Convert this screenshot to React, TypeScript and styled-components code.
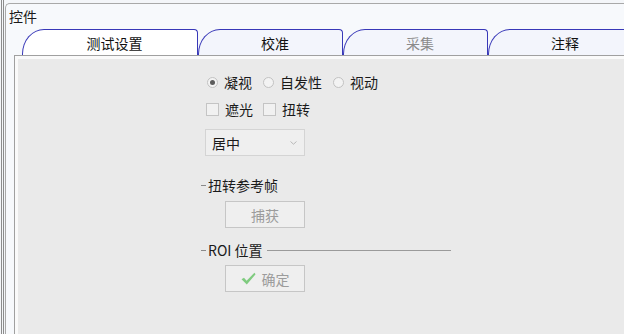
import React from 'react';
import styled, { createGlobalStyle } from 'styled-components';

const GlobalStyle = createGlobalStyle`
  html, body {
    margin: 0;
    padding: 0;
    width: 624px;
    height: 334px;
    overflow: hidden;
    background: #f4f6f9;
    font-family: 'Noto Sans CJK SC', 'Noto Sans', sans-serif;
    font-size: 14px;
    color: #1a1a1a;
  }
`;

const Window = styled.div`
  width: 623px;
  height: 334px;
  margin-left: 1px;
  border-left: 3px double #8c8c8c;
  box-sizing: border-box;
  display: flex;
  overflow: hidden;
`;

const GroupBox = styled.div`
  flex: 1;
  margin: 3px 0 0 1px;
  border-top: 1px solid #a9a9a9;
  border-left: 1px solid #a9a9a9;
  border-top-left-radius: 5px;
  background: #f7f9fc;
  display: flex;
  flex-direction: column;
  min-width: 0;
`;

const Legend = styled.div`
  margin: 3px 0 0 3px;
  height: 18px;
  line-height: 18px;
`;

const TabArea = styled.div`
  flex: 1;
  margin: 4px 0 0 8px;
  display: flex;
  flex-direction: column;
  min-width: 0;
`;

const TabRow = styled.div`
  display: flex;
  padding-left: 8px;
  height: 26px;
`;

const Tab = styled.div<{ $active?: boolean; $disabled?: boolean; $width: number }>`
  flex: 0 0 ${p => p.$width}px;
  box-sizing: border-box;
  height: 26px;
  border: 1px solid #3838b8;
  border-bottom: none;
  border-top-left-radius: 22px 25px;
  border-top-right-radius: 4px;
  background: ${p => (p.$active ? '#ffffff' : '#f3f5fc')};
  color: ${p => (p.$disabled ? '#8a8a8a' : '#111111')};
  display: flex;
  align-items: center;
  justify-content: center;
  padding-left: 9px;
  line-height: 1;
`;

const Panel = styled.div`
  flex: 1;
  border-top: 1px solid #a0a0a0;
  border-left: 1px solid #a0a0a0;
  background: #fafafa;
  padding: 3px 0 0 3px;
  display: flex;
`;

const PanelFill = styled.div`
  flex: 1;
  background: #eaeaea;
  padding: 15px 0 0 183px;
`;

const Column = styled.div`
  display: flex;
  flex-direction: column;
  align-items: flex-start;
`;

const OptionRow = styled.div<{ $top: number }>`
  display: flex;
  align-items: center;
  height: 16px;
  margin: ${p => p.$top}px 0 0 5px;
`;

const Option = styled.label`
  display: flex;
  align-items: center;
  margin-right: 10px;
  line-height: 16px;
`;

const Radio = styled.span<{ $checked?: boolean }>`
  width: 11px;
  height: 11px;
  margin: 0 6px 0 1px;
  box-sizing: border-box;
  border: 1px solid #c2c2c2;
  border-radius: 50%;
  background: #f3f3f3;
  display: flex;
  align-items: center;
  justify-content: center;

  &::after {
    content: '';
    width: 5px;
    height: 5px;
    border-radius: 50%;
    background: ${p => (p.$checked ? '#5c5c5c' : 'transparent')};
  }
`;

const Checkbox = styled.span`
  width: 13px;
  height: 13px;
  margin-right: 6px;
  box-sizing: border-box;
  border: 1px solid #c4c4c4;
  background: #f1f1f1;
`;

const Select = styled.div`
  margin: 12px 0 0 4px;
  width: 100px;
  height: 27px;
  box-sizing: border-box;
  border: 1px solid #d4d4d4;
  background: #efefef;
  display: flex;
  align-items: center;
  justify-content: space-between;
  padding: 0 7px 0 6px;
`;

const SectionTitle = styled.div<{ $top: number; $lineTo?: number }>`
  margin-top: ${p => p.$top}px;
  height: 16px;
  display: flex;
  align-items: center;
  line-height: 16px;

  &::before {
    content: '';
    width: 5px;
    height: 1px;
    margin-right: 2px;
    background: #8a8a8a;
  }

  &::after {
    content: '';
    width: ${p => p.$lineTo ?? 0}px;
    height: 1px;
    margin-left: ${p => (p.$lineTo ? 4 : 0)}px;
    background: #9a9a9a;
  }
`;

const Button = styled.div<{ $top: number }>`
  margin: ${p => p.$top}px 0 0 24px;
  width: 80px;
  height: 27px;
  box-sizing: border-box;
  border: 1px solid #c6c6c6;
  background: #efefef;
  color: #9c9c9c;
  display: flex;
  align-items: center;
  justify-content: center;
  gap: 6px;
`;

const Chevron = () => (
  <svg width="7" height="4" viewBox="0 0 7 4">
    <path d="M0.5 0.5 L3.5 3.2 L6.5 0.5" fill="none" stroke="#b8b8b8" strokeWidth="1" />
  </svg>
);

const CheckMark = () => (
  <svg width="15" height="13" viewBox="0 0 15 13">
    <path d="M0.5 7.2 L3 5.8 L5.6 8.8 L13.4 0.8 L14.6 2.2 L5.8 12.6 Z" fill="#7fcb7f" />
  </svg>
);

export default function App() {
  return (
    <>
      <GlobalStyle />
      <Window>
        <GroupBox>
          <Legend>控件</Legend>
          <TabArea>
            <TabRow>
              <Tab $active $width={176}>测试设置</Tab>
              <Tab $width={145}>校准</Tab>
              <Tab $disabled $width={145}>采集</Tab>
              <Tab $width={145}>注释</Tab>
            </TabRow>
            <Panel>
              <PanelFill>
                <Column>
                  <OptionRow $top={0}>
                    <Option><Radio $checked />凝视</Option>
                    <Option><Radio />自发性</Option>
                    <Option><Radio />视动</Option>
                  </OptionRow>
                  <OptionRow $top={11}>
                    <Option><Checkbox />遮光</Option>
                    <Option><Checkbox />扭转</Option>
                  </OptionRow>
                  <Select>
                    <span>居中</span>
                    <Chevron />
                  </Select>
                  <SectionTitle $top={21}>扭转参考帧</SectionTitle>
                  <Button $top={8}>捕获</Button>
                  <SectionTitle $top={14} $lineTo={184}>ROI 位置</SectionTitle>
                  <Button $top={7}>
                    <CheckMark />
                    确定
                  </Button>
                </Column>
              </PanelFill>
            </Panel>
          </TabArea>
        </GroupBox>
      </Window>
    </>
  );
}
